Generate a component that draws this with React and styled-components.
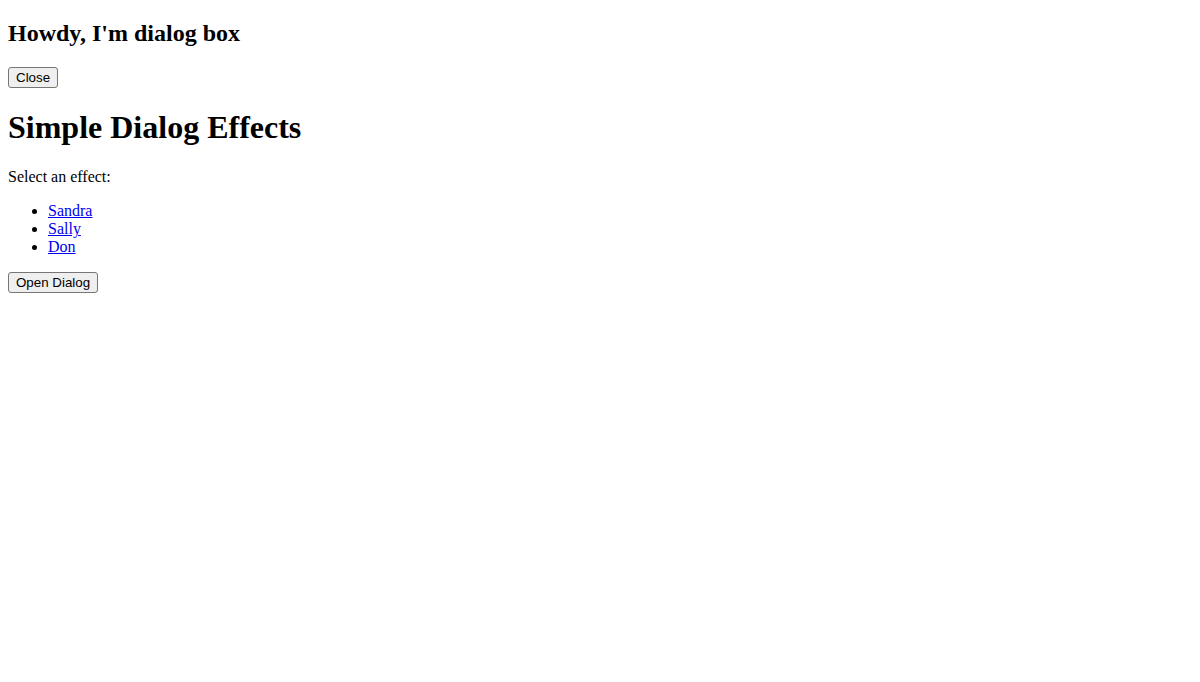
import React from 'react'
import { styled, createGlobalStyle } from 'styled-components'

const GlobalStyle = createGlobalStyle`
body {
  margin: 0 8px;
  font-family: "Liberation Serif", "Times New Roman", serif;
  font-size: 16px;
  color: #000;
  background: #fff;
}
`

const Dialog = styled.div``

const DialogTitle = styled.h2`
font-size: 1.5em;
font-weight: bold;
margin: 0.83em 0;
`

const Title = styled.h1`
font-size: 2em;
font-weight: bold;
margin: 0.67em 0;
`

const Text = styled.p`
margin: 1em 0;
`

const EffectList = styled.ul`
margin: 1em 0;
padding-left: 40px;
list-style: disc;
`

const EffectLink = styled.a`
color: #0000ee;
text-decoration: underline;
cursor: pointer;
`

const Button = styled.button`
font-family: "Liberation Sans", Arial, sans-serif;
font-size: 13.333px;
line-height: 15px;
padding: 2px 7px;
margin: 0;
color: #000;
background: #efefef;
border: 1px solid #767676;
border-radius: 3px;
`

const effects = ['Sandra', 'Sally', 'Don']

const App = () => {
   return (
      <>
         <GlobalStyle />
         <Dialog>
            <DialogTitle>Howdy, I'm dialog box</DialogTitle>
            <Button>Close</Button>
         </Dialog>
         <Title>Simple Dialog Effects</Title>
         <Text>Select an effect:</Text>
         <EffectList>
            {effects.map((name) => (
               <li key={name}><EffectLink href="#">{name}</EffectLink></li>
            ))}
         </EffectList>
         <Button>Open Dialog</Button>
      </>
   )
}

export default App
